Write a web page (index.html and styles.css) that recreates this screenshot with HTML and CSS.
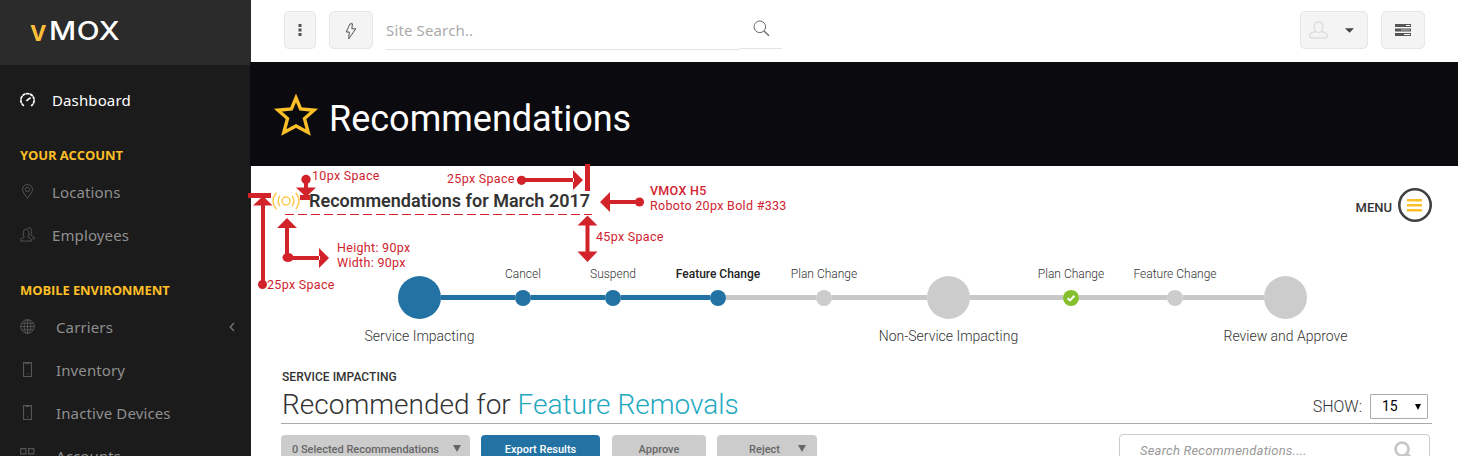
FILE: index.html
```html
<!DOCTYPE html>
<html lang="en">
<head>
<meta charset="utf-8">
<title>Recommendations</title>
<link rel="stylesheet" href="styles.css">
</head>
<body>
<aside class="sidebar">
  <div class="brand"><span class="brand-v">v</span><span class="brand-rest">MOX</span></div>
  <nav class="nav">
    <a class="item active"><svg class="ico" viewBox="0 0 16 16"><path d="M4.2 14.8A7.100 7.100 0 1 1 11.8 14.8" fill="none" stroke="currentColor" stroke-width="1.8" stroke-dasharray="3.6 .5"/><path d="M6.800 9.500L11.3 6" stroke="currentColor" stroke-width="1.9"/></svg><span>Dashboard</span></a>
    <h6 class="group">YOUR ACCOUNT</h6>
    <a class="item"><svg class="ico" viewBox="0 0 16 16" fill="none" stroke="currentColor"><path d="M8 15.3C6 12 2.7 8.800 2.700 5.800a5.300 5.300 0 0 1 10.600 0C13.300 8.800 10 12 8 15.300Z"/><circle cx="8" cy="5.800" r="2.300"/></svg><span>Locations</span></a>
    <a class="item"><svg class="ico" viewBox="0 0 16 16" fill="none" stroke="currentColor"><path d="M.6 15V13.500C.6 12 4.500 12 4.500 10.700C3 9 2.600 2.300 6.500 2.300S10 9 8.500 10.700C8.500 12 12.300 12 12.300 13.500V15Z"/><path d="M8 1C12.500-.3 13.500 4 11.500 8.500C11.500 10 15.400 10 15.400 11.500V12.500H13"/></svg><span>Employees</span></a>
    <h6 class="group">MOBILE ENVIRONMENT</h6>
    <a class="item wide"><svg class="ico" viewBox="0 0 16 16" fill="none" stroke="currentColor"><circle cx="8" cy="8" r="7.300"/><ellipse cx="8" cy="8" rx="3.600" ry="7.300"/><path d="M8 .7V15.300M.7 8H15.300M1.700 4.500H14.300M1.700 11.500H14.300"/></svg><span>Carriers</span><svg class="chev" viewBox="0 0 6 10"><path d="M5 1L1.200 5L5 9" fill="none" stroke="currentColor" stroke-width="1.300"/></svg></a>
    <a class="item wide"><svg class="ico" viewBox="0 0 16 16" fill="none" stroke="currentColor"><path d="M3.800.6H12.200V15.400H3.800ZM6 1.500H10M7.500 12.800H8.800" stroke-width="1.200"/></svg><span>Inventory</span></a>
    <a class="item wide"><svg class="ico" viewBox="0 0 16 16" fill="none" stroke="currentColor"><path d="M3.800.6H12.200V15.400H3.800ZM6 1.500H10M7.500 12.800H8.800" stroke-width="1.200"/></svg><span>Inactive Devices</span></a>
    <a class="item wide"><svg class="ico" viewBox="0 0 16 16" fill="none" stroke="currentColor"><path d="M.7.7H6.300V6.300H.7ZM9.200.7H14.800V6.300H9.200ZM.7 9.200H6.300V14.800H.7ZM9.200 9.200H14.800V14.800H9.200Z" stroke-width="1.200"/></svg><span>Accounts</span></a>
  </nav>
</aside>
<main class="main">
  <header class="topbar">
    <button class="tool dots"><svg width="4" height="12" viewBox="0 0 4 12"><path d="M.5 0h3v3h-3zM.5 4.500h3v3h-3zM.5 9h3v3h-3z" fill="#555"/></svg></button>
    <button class="tool bolt"><svg width="12" height="17" viewBox="0 0 12 17"><path d="M7.500.8H5L1.200 9H4.300L3.700 15.800L10.800 5.800H6.800Z" fill="none" stroke="#555" stroke-linejoin="round"/></svg></button>
    <div class="sitesearch"><span>Site Search..</span></div>
    <div class="searchbtn"><svg width="17" height="17" viewBox="0 0 17 17" fill="none" stroke="#666"><circle cx="6.800" cy="6.800" r="5.800"/><path d="M11 11L16 15.800" stroke-width="1.300"/></svg></div>
    <button class="tool user"><svg width="19" height="18" viewBox="0 0 19 18" fill="none" stroke="#dedede" stroke-width="1.500"><path d="M6.700 10.500C5.500 9.300 5.200 7.500 5.200 5.600C5.200 2.700 6.800 1 9.500 1S13.800 2.700 13.800 5.600C13.800 7.500 13.500 9.300 12.300 10.500C14.500 11.200 18.200 11.600 18.200 14.600C18.200 16.500 17.500 17.100 16 17.100H3C1.500 17.100.8 16.500.8 14.600C.8 11.600 4.500 11.200 6.700 10.500ZM6.700 10.500Q9.500 12.500 12.300 10.500"/></svg><svg width="9" height="5" viewBox="0 0 9 5"><path d="M0 .3H9L4.500 4.800Z" fill="#444"/></svg></button>
    <button class="tool tasks"><svg width="16" height="12" viewBox="0 0 16 12"><path d="M0 0h16v3H0zM0 4.500h16v3H0zM0 9h16v3H0z" fill="#555"/><path d="M11 1h4v1h-4zM9 10h6v1H9z" fill="#fff"/><path d="M6 5.500h9v1H6z" fill="#bbb"/></svg></button>
  </header>
  <section class="hero">
    <svg width="46" height="46" viewBox="0 0 46 46"><path d="M23 5L27.600 16L41 17.200L31.500 25.600L35.200 39.500L23 33L10.800 39.500L14.500 25.600L5 17.200L18.400 16Z" fill="none" stroke="#fdbf27" stroke-width="3.400"/></svg>
    <h1>Recommendations</h1>
  </section>
  <section class="subhead">
    <svg class="signal" width="28" height="18" viewBox="0 0 28 18" fill="none" stroke="#fcc94f" stroke-width="1.500"><circle cx="14" cy="9" r="4"/><path d="M7.800 3.800Q4.600 9 7.800 14.200M4.200.8Q-2.300 9 4.200 17.200M20.200 3.800Q23.400 9 20.200 14.200M23.800.8Q30.300 9 23.800 17.200"/></svg>
    <h5>Recommendations for March 2017</h5>
    <div class="menu"><span>MENU</span><svg width="34" height="34" viewBox="0 0 34 34"><circle cx="17" cy="17" r="15.700" fill="#fff" stroke="#404041" stroke-width="2.600"/><path d="M9 12.200H24M9 17.200H24M9 22.300H24" stroke="#fdbf27" stroke-width="2.600"/></svg></div>
  </section>
  <section class="timeline">
    <div class="node big done"><span class="below t1">Service Impacting</span></div>
    <i class="link done w74"></i>
    <div class="node done"><span class="above">Cancel</span></div>
    <i class="link done w74"></i>
    <div class="node done"><span class="above">Suspend</span></div>
    <i class="link done w89"></i>
    <div class="node done"><span class="above bold">Feature Change</span></div>
    <i class="link w90"></i>
    <div class="node"><span class="above">Plan Change</span></div>
    <i class="link w95"></i>
    <div class="node big"><span class="below t2">Non-Service Impacting</span></div>
    <i class="link w93"></i>
    <div class="node ok"><span class="above">Plan Change</span><svg width="16" height="16" viewBox="0 0 16 16"><path d="M4.600 8.200L7 10.400L11.500 5.800" fill="none" stroke="#fff" stroke-width="2"/></svg></div>
    <i class="link w88"></i>
    <div class="node"><span class="above">Feature Change</span></div>
    <i class="link w81"></i>
    <div class="node big"><span class="below t3">Review and Approve</span></div>
  </section>
  <section class="results">
    <div class="results-head">
      <div>
        <p class="eyebrow">SERVICE IMPACTING</p>
        <h2>Recommended for <em>Feature Removals</em></h2>
      </div>
      <div class="show"><span>SHOW:</span><div class="select"><span>15</span><svg width="6" height="6" viewBox="0 0 6 6"><path d="M0 0H6L3 6Z"/></svg></div></div>
    </div>
    <div class="actions">
      <button class="btn b1"><span>0 Selected Recommendations</span><svg width="8" height="7" viewBox="0 0 8 7"><path d="M0 0H8L4 7Z" fill="#666"/></svg></button>
      <button class="btn b2 primary"><span>Export Results</span></button>
      <button class="btn b3"><span>Approve</span></button>
      <button class="btn b4"><span>Reject</span><svg width="8" height="7" viewBox="0 0 8 7"><path d="M0 0H8L4 7Z" fill="#666"/></svg></button>
      <div class="filter"><span>Search Recommendations....</span><svg width="18" height="20" viewBox="0 0 18 20" fill="none" stroke="#c6c6c6"><circle cx="8" cy="8" r="6.500" stroke-width="2.600"/><path d="M12.500 12.500L17 17" stroke-width="3"/></svg></div>
    </div>
  </section>
</main>
<div class="notes">
  <svg class="arrows" width="1458" height="456" viewBox="0 0 1458 456" fill="#d2232a">
    <path d="M248 193h23v5h-23zM261 200h4v84h-4zM263 196L272.500 205.500H253Z"/><circle cx="262.500" cy="284.500" r="4.500"/>
    <circle cx="306" cy="179.500" r="4.700"/><path d="M304 180h4v8h-4zM296 187.500H316L306 197ZM300 195h10v5h-10z"/>
    <path d="M287 218L297 228H277ZM285 227h4v31h-4zM288 256h32v4h-32zM319 248V268L329 258Z"/><ellipse cx="288" cy="257.500" rx="5.500" ry="4.600"/>
    <circle cx="521.500" cy="180.300" r="4.600"/><path d="M521 178h53v4h-53zM573 170V190L583 180ZM585 164h5v27h-5z"/>
    <circle cx="639.500" cy="202" r="4.600"/><path d="M609 200h30v4h-30zM610 192V212L600 202Z"/>
    <path d="M587.500 215.500L597.500 225.500H577.500ZM585.500 225h4v27h-4zM577.500 251.500H597.500L587.500 262Z"/>
    <path d="M285 214.500H592" stroke="#d2232a" stroke-dasharray="9 4" fill="none"/>
  </svg>
  <span class="note n1">10px Space</span>
  <span class="note n2">25px Space</span>
  <span class="note n3"><b>VMOX H5</b><br>Roboto 20px Bold #333</span>
  <span class="note n4">45px Space</span>
  <span class="note n5">Height: 90px<br>Width: 90px</span>
  <span class="note n6">25px Space</span>
</div>
</body>
</html>
```
FILE: styles.css
```css
* { box-sizing: border-box; }
body { margin: 0; width: 1458px; height: 456px; overflow: hidden; display: flex; position: relative; background: #fff; font-family: Roboto, sans-serif; color: #333; }
h1, h2, h5, h6, p { margin: 0; font-weight: 400; }
svg { display: block; flex: none; }
button { font: inherit; padding: 0; border: 0; }
span { white-space: nowrap; }

.sidebar { width: 251px; height: 456px; overflow: hidden; flex: none; background: #1b1b1b; font-family: "Noto Sans", "Open Sans", sans-serif; }
.brand { height: 65px; padding: 0 0 3px 30px; display: flex; align-items: center; background: #2b2b2b; font-family: Inter, sans-serif; font-weight: 500; font-size: 25px; line-height: 30px; color: #fff; }
.brand-v { color: #fdbf3a; width: 19px; font-size: 28px; font-weight: 600; }
.brand-rest { letter-spacing: .4px; transform: scaleX(1.19); transform-origin: left; }
.nav { padding-top: 13px; }
.item { height: 43px; padding: 0 16px 0 20px; display: flex; align-items: center; color: #8f8f8f; font-size: 15px; line-height: 20px; letter-spacing: .12px; }
.item .ico { width: 15px; height: 15px; margin-right: 17px; color: #555; }
.item.wide .ico { margin-right: 21px; }
.item.active, .item.active .ico { color: #fff; }
.chev { width: 6px; height: 10px; margin-left: auto; color: #777; }
.group { height: 49px; padding: 25px 0 0 20px; font: 700 13px/18px "Open Sans", sans-serif; letter-spacing: -.1px; color: #fdbf27; }

.main { flex: 1; min-width: 0; }
.topbar { height: 62px; padding: 11px 33px 0 33px; display: flex; align-items: flex-start; }
.tool { height: 38px; border: 1px solid #e6e6e6; border-radius: 5px; background: #f4f4f4; display: flex; align-items: center; justify-content: center; }
.dots { width: 32px; }
.bolt { width: 44px; margin-left: 13px; padding-top: 3px; }
.sitesearch { width: 354px; height: 39px; margin-left: 13px; border-bottom: 1px solid #e4e4e4; font: 15px/38px "Noto Sans", "Open Sans", sans-serif; letter-spacing: .14px; color: #aaa; }
.searchbtn { width: 42px; height: 38px; border-bottom: 1px solid #e4e4e4; padding: 9px 0 0 13px; }
.user { width: 68px; margin-left: auto; padding: 0 5px 0 0; gap: 17px; }
.tasks { width: 44px; margin-left: 13px; }
.hero { height: 104px; margin-left: -1px; padding: 3px 0 0 23px; display: flex; align-items: center; background: #0b0a0f; }
.hero h1 { margin: 7px 0 0 10px; font-size: 36px; line-height: 44px; color: #fff; }
.subhead { height: 84px; padding: 22px 26px 0 21px; display: flex; align-items: flex-start; }
.signal { margin-top: 4px; }
.subhead h5 { margin-left: 9px; font-size: 18px; line-height: 26px; font-weight: 600; letter-spacing: .02px; }
.menu { margin-left: auto; display: flex; gap: 6px; align-items: center; font-size: 13px; font-weight: 500; }
.menu span { padding-top: 4px; }

.timeline { height: 95px; padding: 0 0 0 147px; display: flex; align-items: center; }
.node { position: relative; width: 16px; height: 16px; border-radius: 50%; background: #ccc; flex: none; display: flex; justify-content: center; }
.node.big { width: 43px; height: 43px; }
.link { height: 5px; background: #c8c8c8; flex: none; }
.node.done, .link.done { background: #2273a4; }
.node.ok { background: #84c02c; }
.w74 { width: 74px; }
.w89 { width: 89px; }
.w90 { width: 90px; }
.w95 { width: 95px; }
.w93 { width: 93px; }
.w88 { width: 88px; }
.w81 { width: 81px; }
.above { position: absolute; bottom: 24px; font-size: 12px; line-height: 16px; font-weight: 300; }
.above.bold { font-weight: 500; color: #222; }
.below { position: absolute; top: 50px; font-size: 14px; line-height: 20px; font-weight: 300; }

.results { padding: 0 26px 0 30px; }
.results-head { height: 79px; padding-right: 4px; display: flex; justify-content: space-between; border-bottom: 1px solid #aaa; }
.eyebrow { padding: 24px 0 0 1px; font-size: 12px; line-height: 16px; font-weight: 500; letter-spacing: .05px; }
.results-head h2 { padding: 1px 0 0 1px; font-size: 28px; line-height: 38px; font-weight: 300; }
.results-head em { font-style: normal; color: #22a9c0; }
.show { display: flex; gap: 8px; padding-top: 49px; font-size: 16px; line-height: 25px; font-weight: 300; }
.select { width: 58px; height: 25px; border: 1px solid #aaa; border-radius: 1px; padding: 0 6px 0 11px; display: flex; align-items: center; justify-content: space-between; font-size: 14px; font-weight: 400; color: #000; }
.actions { display: flex; padding-top: 11px; align-items: flex-start; }
.btn { height: 29px; border-radius: 4px; background: #ccc; color: #666; font-size: 11px; font-weight: 500; display: flex; align-items: center; justify-content: center; }
.btn svg { margin-top: -2px; }
.b1 { width: 189px; gap: 14px; padding-left: 2px; }
.b2 { width: 119px; margin-left: 11px; }
.b3 { width: 94px; margin-left: 12px; }
.b4 { width: 100px; margin-left: 11px; padding-left: 21px; gap: 18px; }
.primary { background: #2273a4; color: #fff; }
.filter { width: 311px; height: 33px; margin: -1px 2px 0 auto; border: 1px solid #ccc; border-radius: 4px; padding: 0 17px 0 20px; display: flex; align-items: center; justify-content: space-between; font-size: 13px; font-style: italic; letter-spacing: .22px; color: #999; }

.notes { position: absolute; inset: 0; color: #cf2430; font-size: 12.5px; line-height: 15px; }
.arrows { position: absolute; left: 0; top: 0; }
.note { position: absolute; letter-spacing: .3px; }
.note b { font-weight: 500; }
.n1 { left: 312px; top: 168px; }
.n2 { left: 447px; top: 171px; }
.n3 { left: 650px; top: 183px; }
.n4 { left: 596px; top: 229px; }
.n5 { left: 337px; top: 240px; }
.n6 { left: 267px; top: 277px; }
```
